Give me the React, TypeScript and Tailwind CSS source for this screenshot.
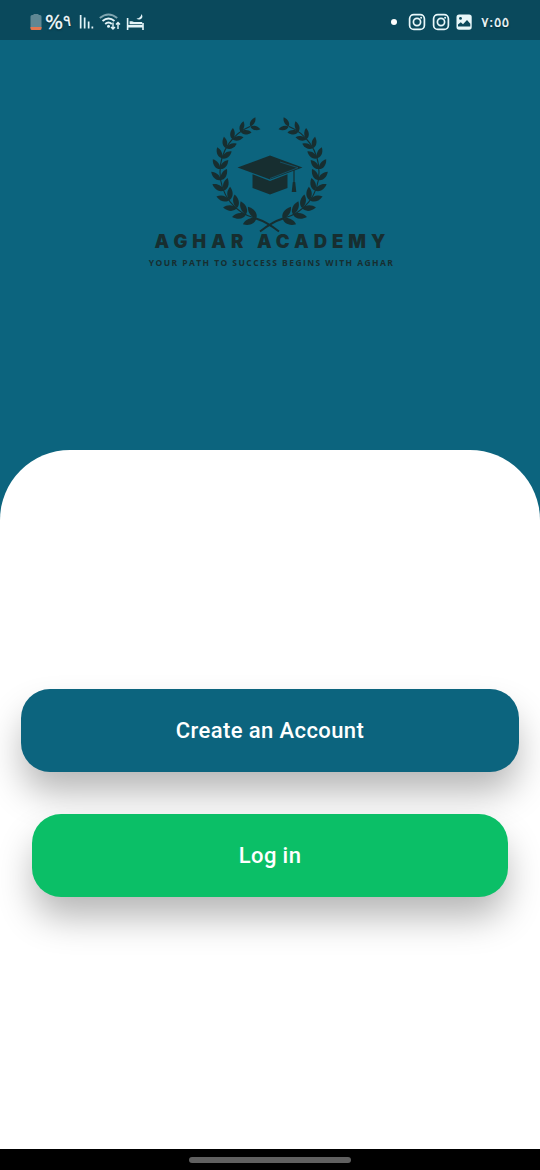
import React from "react";

const LEAF = "M0 0C1.4-2.8 6-4 10.6-.8C7.6 2.1 3.2 2.4 0 0Z";
const PAIRS = 12;

function Branch() {
  const leaves: React.ReactElement[] = [];
  for (let i = 0; i < PAIRS; i++) {
    const t = i / (PAIRS - 1);
    const deg = 106 + t * 141;
    const a = (deg * Math.PI) / 180;
    const x = 70 + 50 * Math.cos(a);
    const y = 66.5 + 49 * Math.sin(a);
    const s = 1.36 - 0.38 * t;
    leaves.push(
      <g key={i} transform={`translate(${x} ${y}) rotate(${deg + 90}) scale(${s})`}>
        <path d={LEAF} transform="rotate(-35)" />
        <path d={LEAF} transform="scale(1 -1) rotate(-35)" />
      </g>
    );
  }
  return (
    <g>
      {leaves}
      <path d="M56 113.5C35 108 20 90 20 67C20 45 34 28 50 21.5" fill="none" stroke="#172e30" strokeWidth="1.1" />
      <path d="M56 113.5C64 116 72 121 79 126.5" fill="none" stroke="#172e30" strokeWidth="1.9" />
    </g>
  );
}

function Crest() {
  return (
    <svg width="140" height="130" viewBox="0 0 140 130" fill="#172e30" className="block">
      <Branch />
      <g transform="translate(139 0) scale(-1 1)">
        <Branch />
      </g>
      <path d="M37.5 62.5L70 50.5L102.5 62.5L70 74.5Z" />
      <path d="M52.5 69.2L70 76L87.5 69.2V83L70 89.5L52.5 83Z" />
      <path d="M70 73.5L98 62.7L80 57" fill="none" stroke="#13536a" strokeWidth=".9" />
      <path d="M94 65V79" stroke="#172e30" strokeWidth="1.2" />
      <path d="M92.8 77H95.2L96.3 87H91.7Z" />
    </svg>
  );
}

function Instagram() {
  return (
    <svg width="18" height="18" viewBox="0 0 18 18" fill="none" stroke="#e8f7fa" strokeWidth="1.7">
      <rect x="1.6" y="1.6" width="14.8" height="14.8" rx="4.2" />
      <circle cx="9" cy="9" r="3.6" />
      <circle cx="13.1" cy="4.8" r="1" fill="#e8f7fa" stroke="none" />
    </svg>
  );
}

function StatusBar() {
  return (
    <header dir="ltr" className="flex h-10 shrink-0 items-center justify-between bg-[#0a495c] pt-1 pr-[31px] pl-[30px] text-[#f2fbfd]">
      <div className="flex h-full items-center">
        <svg width="12" height="18" viewBox="0 0 12 18">
          <path d="M3.5 2V1H8.5V2H10Q11.5 2 11.5 3.5V15H.5V3.5Q.5 2 2 2Z" fill="#5f8793" />
          <path d="M.5 14H11.5V15.5Q11.5 17 10 17H2Q.5 17 .5 15.5Z" fill="#e3774f" />
        </svg>
        <span className="ml-[3px] flex w-[27px] items-center font-['DejaVu_Sans',sans-serif] text-[19px] leading-5 [text-shadow:0_1px_2px_#0008]">
          <span className="w-[18px] [-webkit-text-stroke:0.3px]">%</span>
          <span className="pb-0.5 text-[15px] [-webkit-text-stroke:0.2px]">٩</span>
        </span>
        <svg width="15" height="16" viewBox="0 0 15 16" className="ml-[7px]" fill="#e3f4f8">
          <path d="M.8 1H2.5V14.5H.8ZM4.8 3.5H6.5V14.5H4.8ZM8.8 7.5H10.5V14.5H8.8ZM12.5 12.5H14.2V14.5H12.5Z" />
        </svg>
        <svg width="22" height="20" viewBox="0 0 22 20" className="ml-[5px]" fill="none" strokeWidth="1.9">
          <path d="M.8 6Q9.5-1.2 18.2 6" stroke="#7fa5b0" />
          <path d="M3.5 9Q9.5 3.8 15.5 9" stroke="#e3f4f8" />
          <path d="M6.2 12Q9.5 9.1 12.8 12" stroke="#e3f4f8" />
          <circle cx="9.5" cy="14.3" r="1.5" fill="#e3f4f8" />
          <path d="M14 10.5V17M12 15L14 17L16 15M19 17V10.5M17 12.5L19 10.5L21 12.5" stroke="#e3f4f8" strokeWidth="1.4" />
        </svg>
        <svg width="19" height="18" viewBox="0 0 19 18" className="ml-[5px]" fill="#e3f4f8">
          <path d="M.8 5H2.4V12H16.2V10H17.8V17H16.2V14.4H2.4V17H.8Z" />
          <path d="M3.6 8.2H6L8 9H16.2V11.2H3.6Z" />
          <path d="M15.5 1Q17.8 4.5 14.5 6.2Q12 7.2 10.5 5.5Q14.7 5.4 15.5 1Z" />
        </svg>
      </div>
      <div className="-mr-0.5 flex h-full items-center">
        <span className="mr-[11px] size-1.5 rounded-full bg-white" />
        <Instagram />
        <span className="w-[5.5px]" />
        <Instagram />
        <svg width="18" height="18" viewBox="0 0 18 18" className="ml-[5.5px]">
          <rect x="1.5" y="1.5" width="15.2" height="15.2" rx="2.6" fill="#e8f7fa" />
          <circle cx="5.5" cy="5.4" r="1.4" fill="#0a495c" />
          <path d="M3 13.5V11.6L5.8 9.3L8 11.2L12 6.9L15.3 10.7V13.5Z" fill="#0a495c" />
        </svg>
        <span className="ml-[8px] w-[30px] whitespace-nowrap pb-px font-['DejaVu_Sans',sans-serif] text-[14.5px] leading-5 [-webkit-text-stroke:0.2px] [direction:ltr] [text-shadow:0_1px_2px_#0008] [unicode-bidi:bidi-override]">٧:٥٥</span>
      </div>
    </header>
  );
}

export default function App() {
  return (
    <div className="flex h-[1170px] w-[540px] flex-col overflow-hidden bg-[#0c647e]">
      <StatusBar />
      <section className="flex h-[410px] shrink-0 flex-col items-center pt-[65px] text-[#172e30]">
        <Crest />
        <h1 className="-mt-[5px] whitespace-nowrap pl-[5px] font-['Inter',sans-serif] text-[18.5px] leading-[22px] font-black tracking-[5px]">
          AGHAR ACADEMY
        </h1>
        <p className="mt-[4px] whitespace-nowrap pl-[3px] font-['Open_Sans',sans-serif] text-[8.5px] leading-[13px] font-bold tracking-[1.43px]">
          YOUR PATH TO SUCCESS BEGINS WITH AGHAR
        </p>
      </section>
      <main className="flex grow flex-col items-center gap-[42px] rounded-t-[70px] bg-white pt-[239px] font-['Roboto',sans-serif] text-[22px] font-medium text-white">
        <button className="h-[83px] w-[498px] rounded-[29px] bg-[#0c647e] tracking-[0.4px] shadow-[0_22px_36px_-2px_#0000004a]">
          Create an Account
        </button>
        <button className="h-[83px] w-[476px] rounded-[29px] bg-[#0bbf67] tracking-[0.4px] shadow-[0_22px_36px_-2px_#0000004a]">
          Log in
        </button>
      </main>
      <footer className="flex h-[21px] shrink-0 justify-center bg-black pt-2">
        <span className="h-[6px] w-[162px] rounded-full bg-[#606060]" />
      </footer>
    </div>
  );
}
